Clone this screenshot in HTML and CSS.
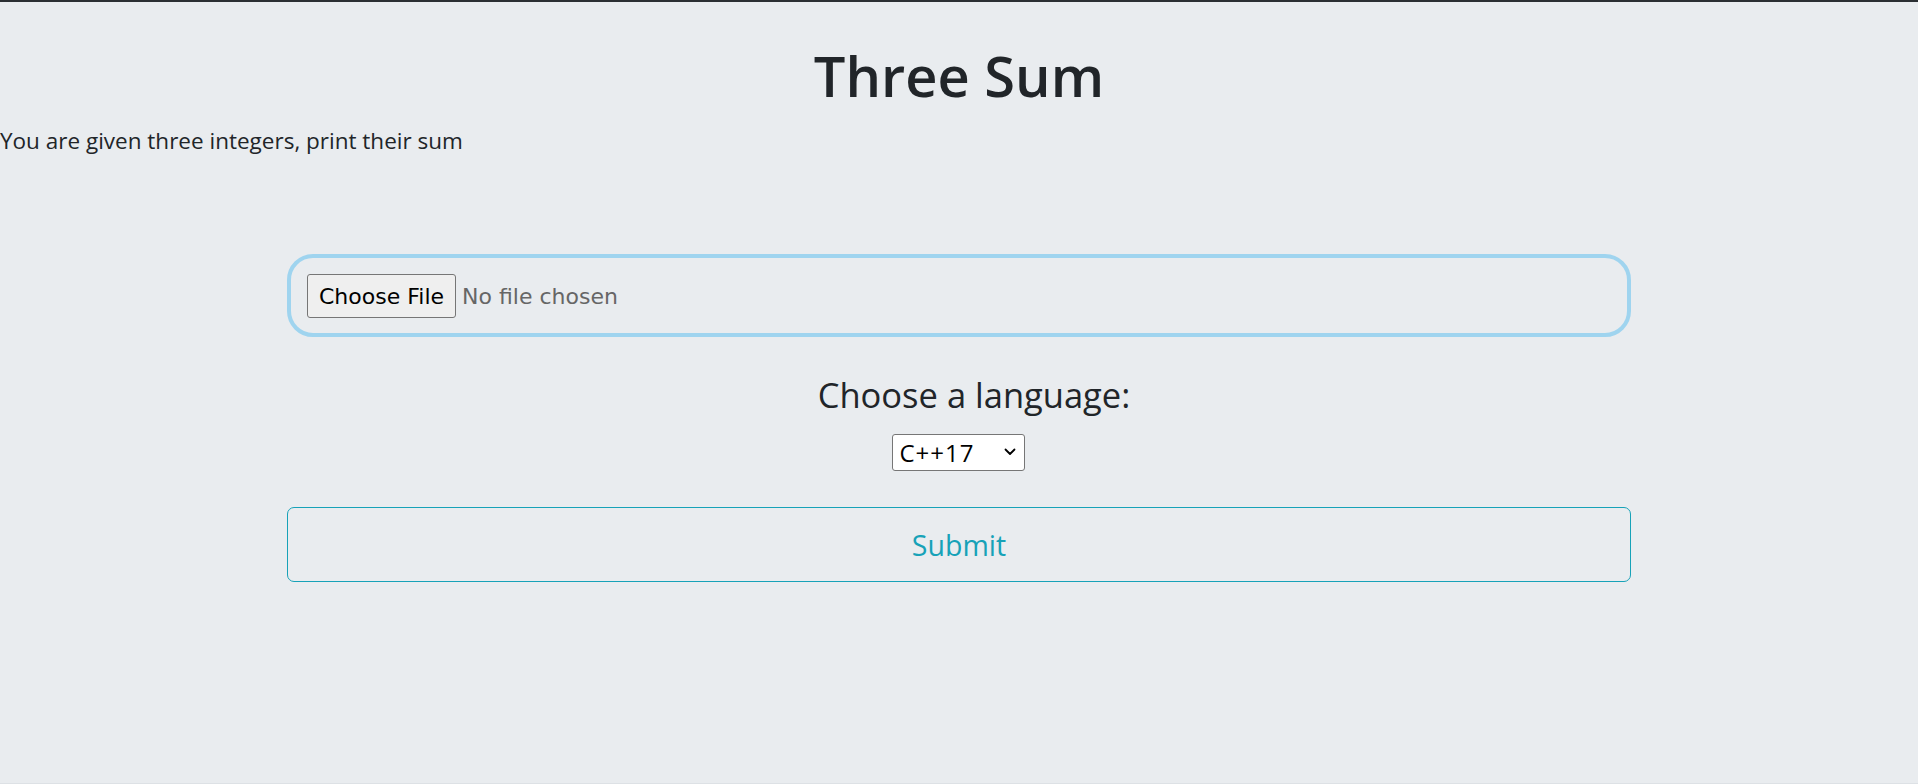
FILE: index.html
```html
<!DOCTYPE html>
<html lang="en">
<head>
<meta charset="utf-8">
<title>Three Sum</title>
<link rel="stylesheet" href="styles.css">
</head>
<body>
<div class="topbar"></div>
<main class="page">
  <h1 class="title">Three Sum</h1>
  <p class="statement">You are given three integers, print their sum</p>
  <form class="submit-form">
    <label class="file-box">
      <input class="file-input" type="file" name="source">
      <span class="file-btn">Choose File</span>
      <span class="file-name">No file chosen</span>
    </label>
    <div class="lang-group">
      <label class="lang-label" for="lang">Choose a language:</label>
      <div class="select-wrap">
        <select class="lang-select" id="lang" name="lang">
          <option>C++17</option>
          <option>Python 3</option>
          <option>Java</option>
        </select>
        <svg class="select-arrow" width="12" height="8" viewBox="0 0 12 8" aria-hidden="true">
          <path d="M1.5 1.5 L6 6 L10.5 1.5" fill="none" stroke="#000" stroke-width="1.8" stroke-linecap="round" stroke-linejoin="round"/>
        </svg>
      </div>
    </div>
    <button class="submit-btn" type="button">Submit</button>
  </form>
</main>
</body>
</html>
```
FILE: styles.css
```css
html, body {
  margin: 0;
  padding: 0;
}
body {
  background: #e9ecef;
  color: #212529;
  font-family: "Open Sans", "Noto Sans", sans-serif;
  height: 784px;
  overflow: hidden;
  border-bottom: 1px solid #dde1e5;
  box-sizing: border-box;
}
.topbar {
  height: 2px;
  background: #2b2f33;
}
.page {
  display: flex;
  flex-direction: column;
}
.title {
  margin: 40px 0 15px;
  text-align: center;
  font-size: 56px;
  font-weight: 600;
  line-height: 1.2;
}
.statement {
  margin: 0;
  font-size: 22.5px;
  line-height: 33px;
}
.submit-form {
  width: 1344px;
  margin: 97px auto 0;
  display: flex;
  flex-direction: column;
  align-items: center;
}
.file-box {
  box-sizing: border-box;
  width: 100%;
  height: 83px;
  border: 4px solid #9fd4ef;
  border-radius: 26px;
  padding: 16px 16px 15px;
  display: flex;
  align-items: center;
  gap: 6px;
}
.file-input {
  display: none;
}
.file-btn {
  box-sizing: border-box;
  height: 44px;
  padding: 0 11px;
  display: flex;
  align-items: center;
  background: #efefef;
  border: 1px solid #767676;
  border-radius: 3px;
  color: #000;
  font-family: "DejaVu Sans", sans-serif;
  font-size: 22px;
}
.file-name {
  color: #666;
  font-family: "DejaVu Sans", sans-serif;
  font-size: 22px;
}
.lang-group {
  margin-top: 34px;
  display: flex;
  flex-direction: column;
  align-items: center;
}
.lang-label {
  font-size: 34.5px;
  line-height: 48px;
  padding-left: 30px;
}
.select-wrap {
  position: relative;
  margin-top: 15px;
  width: 133px;
  height: 37px;
}
.lang-select {
  appearance: none;
  -webkit-appearance: none;
  box-sizing: border-box;
  width: 100%;
  height: 100%;
  font-family: "Open Sans", sans-serif;
  font-size: 24px;
  color: #000;
  background: #fff;
  border: 1px solid #767676;
  border-radius: 3px;
  padding: 0 4px 0 6px;
  letter-spacing: 1px;
}
.select-arrow {
  position: absolute;
  right: 9px;
  top: 14px;
  pointer-events: none;
}
.submit-btn {
  margin-top: 36px;
  box-sizing: border-box;
  width: 100%;
  height: 75px;
  background: transparent;
  border: 1.5px solid #17a2b8;
  border-radius: 7px;
  color: #17a2b8;
  font-family: "Open Sans", sans-serif;
  font-size: 28.5px;
  cursor: pointer;
}
```
